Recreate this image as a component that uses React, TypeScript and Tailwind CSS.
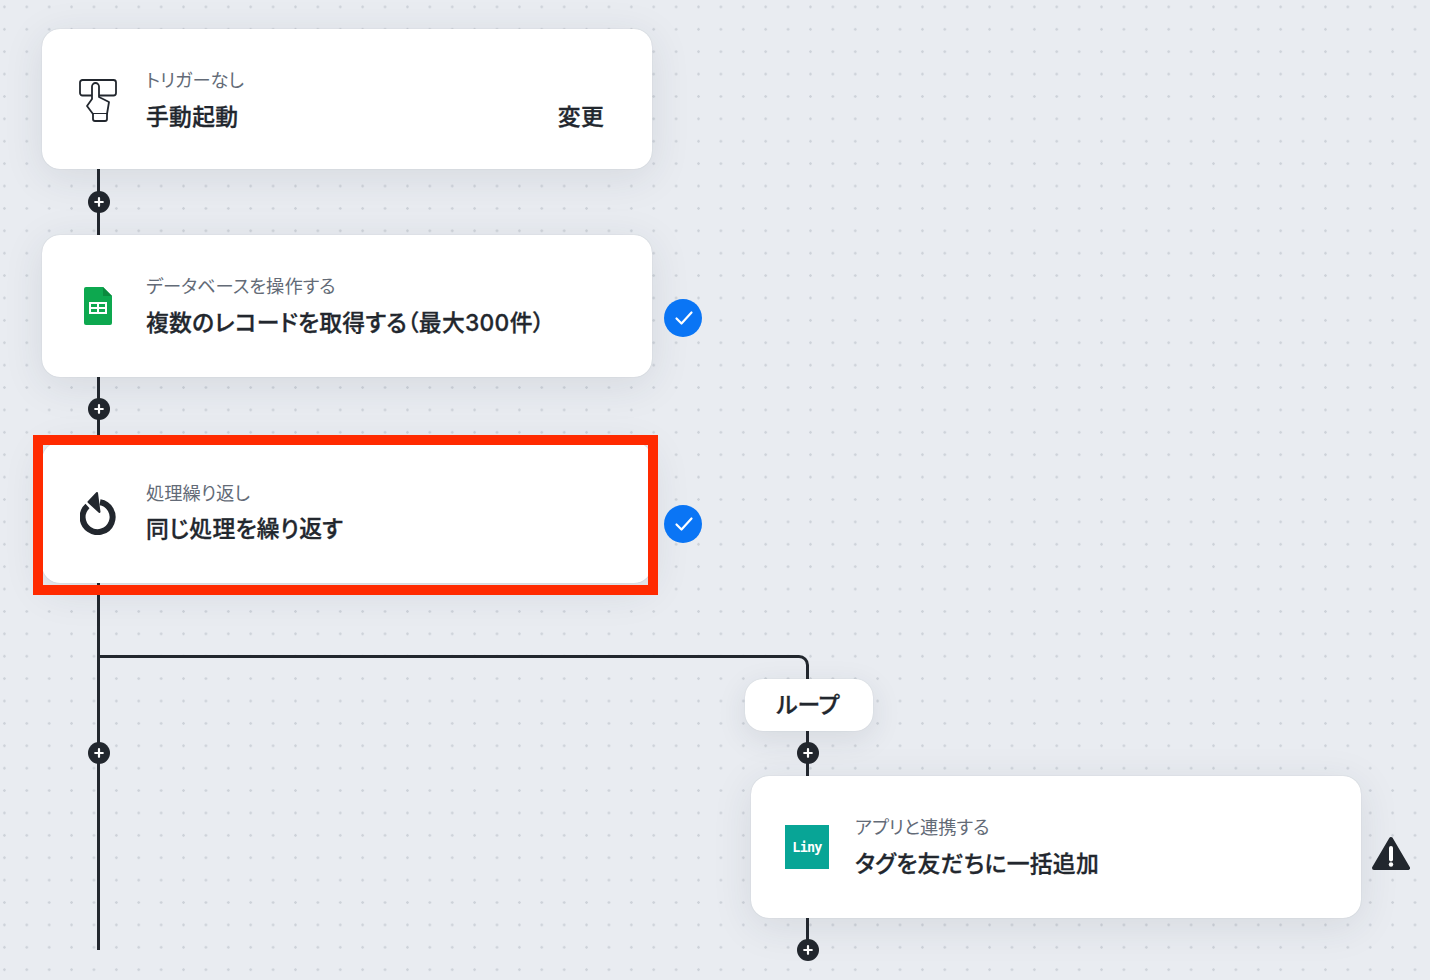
import React from "react";

const PlusDot = () => (
  <div className="w-[22px] h-[22px] shrink-0 rounded-full bg-[#22272e] flex items-center justify-center">
    <svg width="10" height="10" viewBox="0 0 10 10">
      <path d="M5 1.200v7.600M1.200 5h7.600" stroke="#fff" strokeWidth="2.200" strokeLinecap="round" />
    </svg>
  </div>
);

const Connector = ({ className }: { className: string }) => (
  <div className={`w-[3px] ml-[55px] bg-[#22272e] flex flex-col items-center ${className}`}>
    <PlusDot />
  </div>
);

const CheckBadge = ({ className }: { className: string }) => (
  <div className={`absolute left-[622px] w-[38px] h-[38px] rounded-full bg-[#0a75f5] flex items-center justify-center pl-px ${className}`}>
    <svg width="20" height="20" viewBox="0 0 20 20" fill="none">
      <path d="M2.500 10.500l5 5L17.500 4.500" stroke="#fff" strokeWidth="2.200" strokeLinecap="round" strokeLinejoin="round" />
    </svg>
  </div>
);

const Card = ({
  className,
  icon,
  sub,
  title,
  action,
  gap = "gap-[8px]",
  children,
}: {
  className: string;
  icon: React.ReactNode;
  sub: string;
  title: string;
  action?: string;
  gap?: string;
  children?: React.ReactNode;
}) => (
  <div className={`relative w-[610px] shrink-0 bg-white rounded-[18px] shadow-[0_0_1px_rgba(40,50,70,0.25),0_8px_40px_rgba(40,50,70,0.10)] flex items-center pl-[36px] ${className}`}>
    <div className="w-[40px] flex items-center justify-center shrink-0">{icon}</div>
    <div className={`self-start flex-1 flex flex-col pl-[28px] pr-[48px] pt-[38px] ${gap}`}>
      <div className="text-[18.300px] leading-[26px] text-[#636b77]">{sub}</div>
      <div className="flex justify-between text-[22.800px] leading-[32px] tracking-[0.3px] font-medium [-webkit-text-stroke:0.3px_#22272e] text-[#22272e]">
        <span>{title}</span>
        {action && <span>{action}</span>}
      </div>
    </div>
    {children}
  </div>
);

const HandIcon = () => (
  <svg className="mt-[3px]" width="38" height="44" viewBox="0 0 38 44" fill="none" stroke="#22272e" strokeWidth="1.800" strokeLinejoin="round" strokeLinecap="round">
    <rect x="1" y="1" width="36" height="15.500" rx="2.500" />
    <path d="M14 35L8 27L13 20V7.500a3.500 3.500 0 0 1 7 0V18L30 23L28 35z" fill="#fff" />
    <path d="M14 35v5a2 2 0 0 0 2 2h10a2 2 0 0 0 2-2v-5" fill="#fff" />
  </svg>
);

const SheetIcon = () => (
  <svg width="28" height="38" viewBox="0 0 28 38">
    <path d="M2 0h17l9 9v27a2 2 0 0 1-2 2H2a2 2 0 0 1-2-2V2a2 2 0 0 1 2-2z" fill="#0da84f" />
    <path d="M19 0l9 9h-9z" fill="#0a8a3e" />
    <path d="M5 15h18v12H5z" fill="#fff" />
    <path d="M7 17h6v3H7zM15 17h6v3h-6zM7 22h6v3H7zM15 22h6v3h-6z" fill="#0da84f" />
  </svg>
);

const LoopIcon = () => (
  <svg width="36" height="44" viewBox="0 0 36 44" fill="none">
    <path d="M20 11.300A15 15 0 1 1 7.500 15" stroke="#22272e" strokeWidth="6" />
    <path d="M17 2L19.500 21L8.500 11z" fill="#22272e" stroke="#22272e" strokeWidth="2" strokeLinejoin="round" />
  </svg>
);

const LinyIcon = () => (
  <div className="w-[44px] h-[44px] shrink-0 bg-[#08a596] flex items-center justify-center text-white text-[13.500px] font-bold font-['DejaVu_Sans_Mono',monospace] tracking-[-0.8px]">
    Liny
  </div>
);

export default function App() {
  return (
    <div className="relative w-[1430px] h-[980px] overflow-hidden bg-[#e9ecf1] bg-[radial-gradient(circle,#cdd2d9_1px,transparent_1.500px)] bg-[length:22.400px_22.400px] bg-[position:-6.800px_-4.300px] flex font-['Inter','Noto_Sans_CJK_JP',sans-serif] [font-feature-settings:'palt']">
      {/* main column */}
      <div className="w-[709px] shrink-0 pl-[42px] pt-[29px] flex flex-col">
        <Card className="h-[140px]" icon={<HandIcon />} sub="トリガーなし" title="手動起動" action="変更" />
        <Connector className="h-[66px] justify-center" />
        <Card className="h-[142px]" icon={<SheetIcon />} sub="データベースを操作する" title="複数のレコードを取得する（最大300件）">
          <CheckBadge className="top-[64px]" />
        </Card>
        <Connector className="h-[65px] justify-center pb-px" />
        <Card className="h-[141px]" icon={<LoopIcon />} sub="処理繰り返し" title="同じ処理を繰り返す" gap="gap-[7px]">
          <CheckBadge className="top-[63px]" />
          {/* highlight frame */}
          <div className="absolute -left-[9px] -top-[7px] w-[625px] h-[160px] border-[10px] border-[#ff2a00]" />
        </Card>
        <Connector className="h-[367px] pt-[159px]" />
      </div>

      {/* loop branch */}
      <div className="absolute left-[99px] top-[655px] w-[710px] h-[30px] border-t-[3px] border-r-[3px] border-[#22272e] rounded-tr-[10px]" />
      <div className="relative ml-[42px] pt-[679px] flex flex-col">
        <div className="w-[128px] h-[52px] -ml-[6px] pr-[2px] rounded-[18px] bg-white shadow-[0_0_1px_rgba(40,50,70,0.2),0_8px_30px_rgba(40,50,70,0.10)] flex items-center justify-center text-[22.800px] font-medium [-webkit-text-stroke:0.3px_#22272e] text-[#22272e]">
          ループ
        </div>
        <Connector className="h-[45px] justify-center pb-px" />
        <Card className="h-[142px]" icon={<LinyIcon />} sub="アプリと連携する" title="タグを友だちに一括追加">
          <svg className="absolute left-[621px] top-[60px]" width="38" height="36" viewBox="0 0 38 36">
            <path d="M19 3L36 32H2z" fill="#22272e" stroke="#22272e" strokeWidth="4" strokeLinejoin="round" />
            <path d="M19 12v11.500" stroke="#fff" strokeWidth="4" strokeLinecap="round" />
            <circle cx="19" cy="28.500" r="2.200" fill="#fff" />
          </svg>
        </Card>
        <Connector className="h-[32px] justify-end [&>div]:-mb-[11px]" />
      </div>
    </div>
  );
}
